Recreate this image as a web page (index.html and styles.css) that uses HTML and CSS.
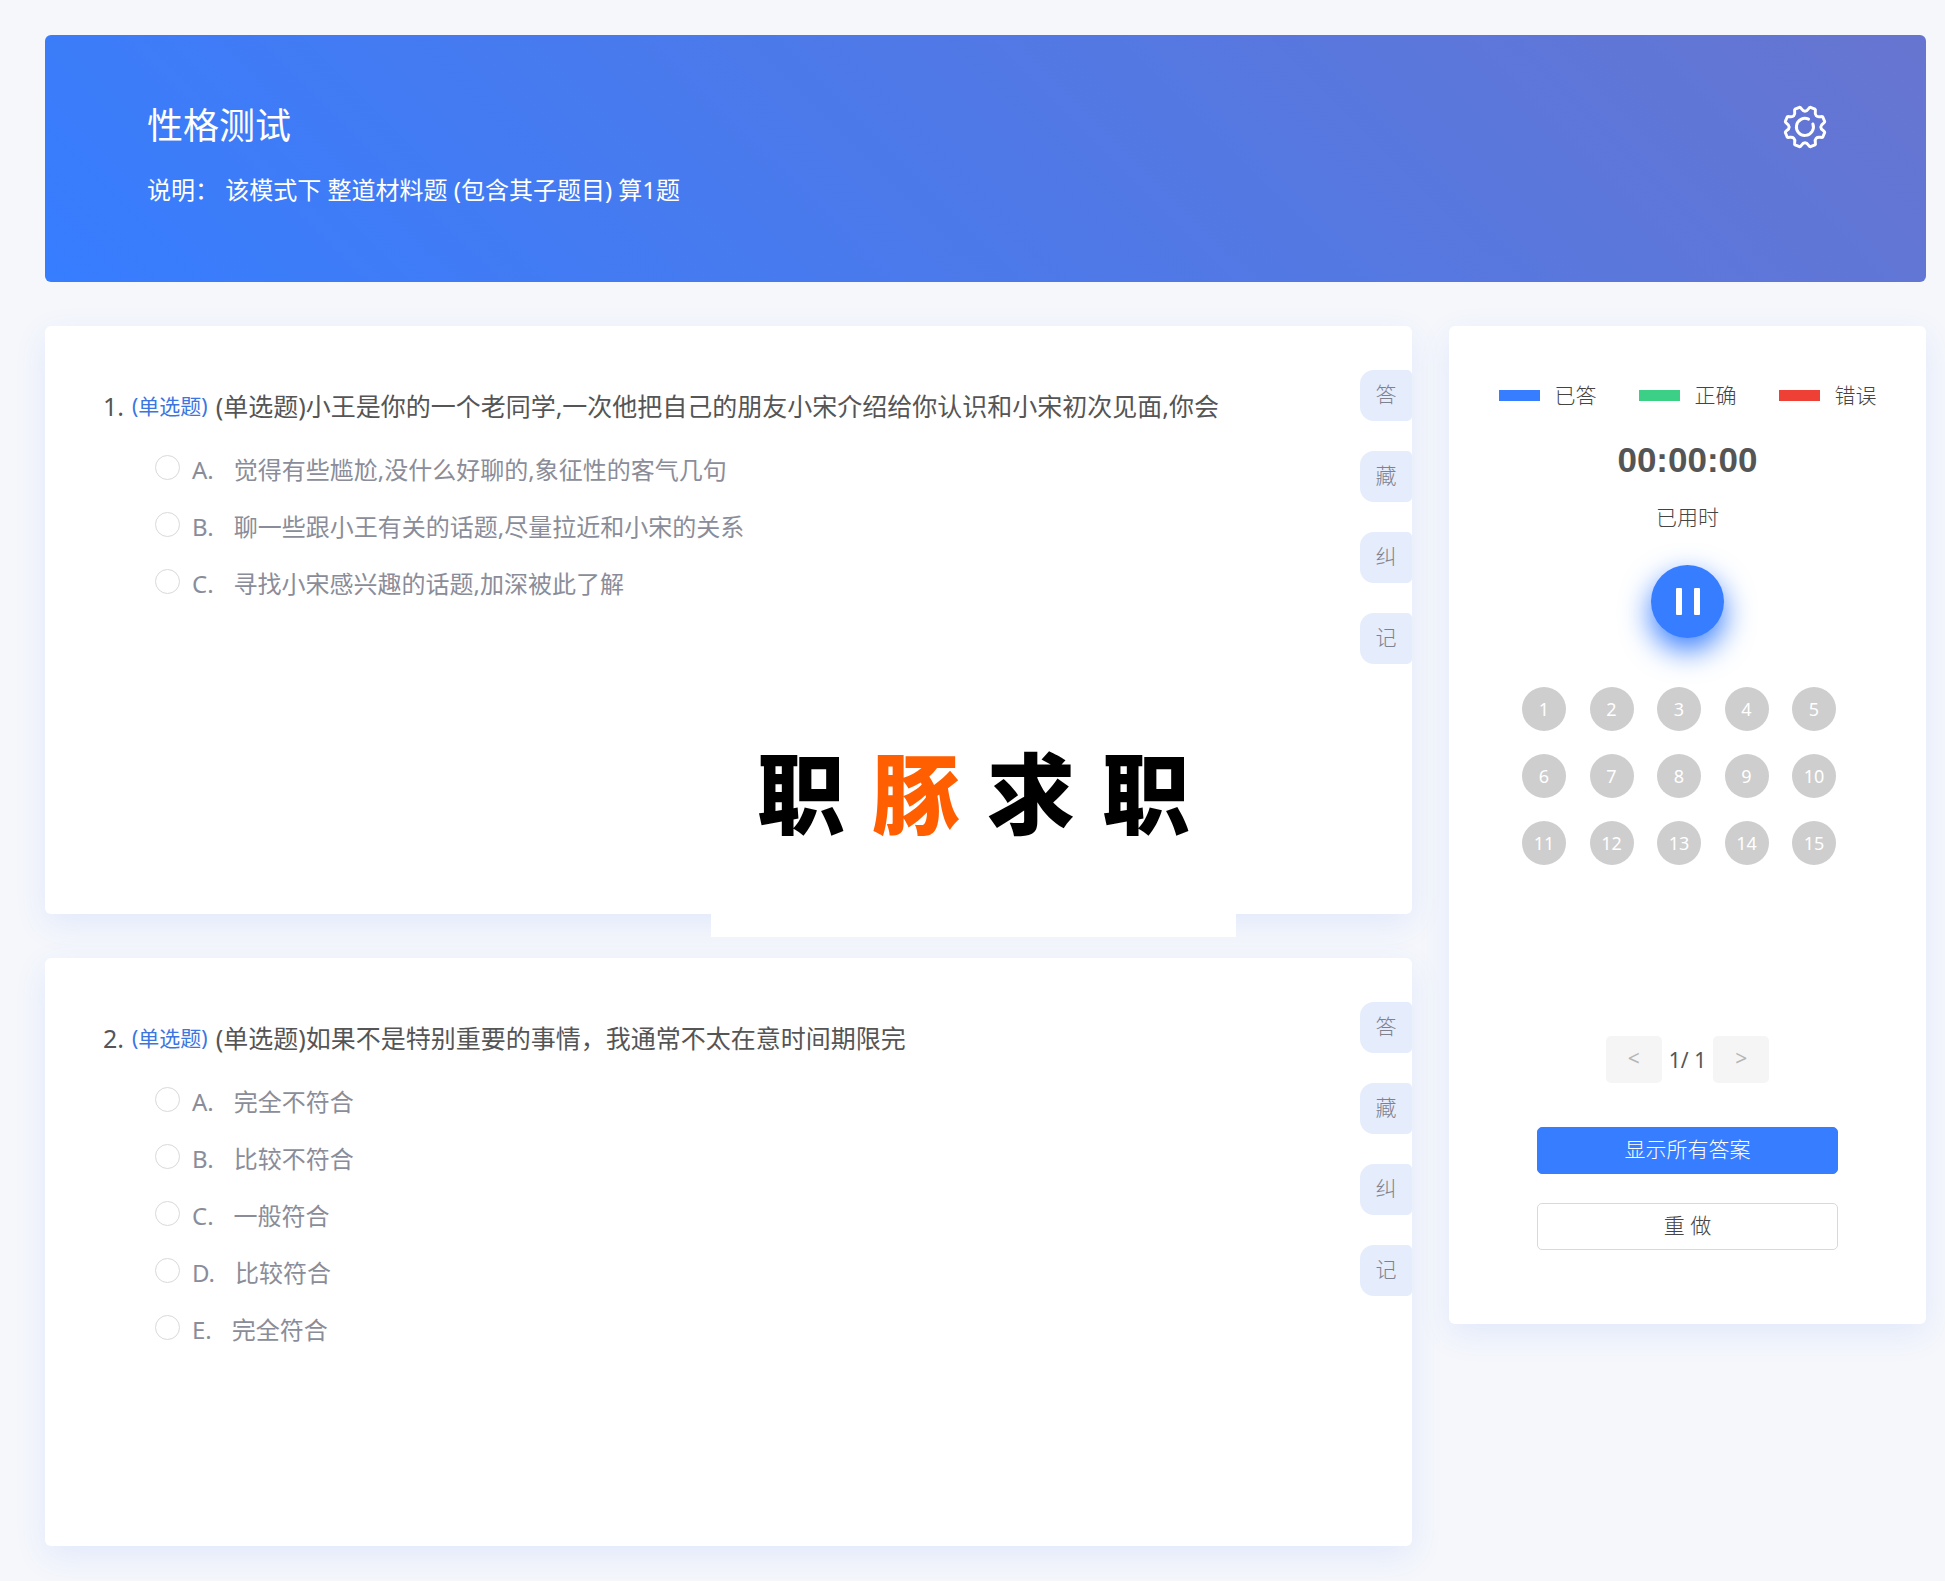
FILE: index.html
```html
<!DOCTYPE html>
<html lang="zh-CN">
<head>
<meta charset="utf-8">
<meta name="viewport" content="width=device-width, initial-scale=1">
<title>性格测试</title>
<link rel="stylesheet" href="styles.css">
</head>
<body>
<header class="banner">
  <div>
    <h1 class="banner-title">性格测试</h1>
    <p class="banner-note">说明： 该模式下 整道材料题 (包含其子题目) 算1题</p>
  </div>
  <button class="settings" type="button" aria-label="设置">
    <svg viewBox="0 0 44 44" width="44" height="44" fill="none" stroke="currentColor" stroke-width="3" stroke-linecap="round" stroke-linejoin="round">
      <path d="M16.500 2.300C18.500 2 18.500 6.200 22 6.200C25.500 6.200 25.500 2 27.500 2.300L32 4.200C33.600 5.400 30.700 8.300 33.200 10.800C35.700 13.300 38.600 10.400 39.800 12L41.700 16.500C42 18.500 37.800 18.500 37.800 22C37.800 25.500 42 25.500 41.700 27.500L39.800 32C38.600 33.600 35.700 30.700 33.200 33.200C30.700 35.700 33.600 38.600 32 39.800L27.500 41.700C25.500 42 25.500 37.800 22 37.800C18.500 37.800 18.500 42 16.500 41.700L12 39.800C10.400 38.600 13.300 35.700 10.800 33.200C8.300 30.700 5.400 33.600 4.200 32L2.300 27.500C2 25.500 6.200 25.500 6.200 22C6.200 18.500 2 18.500 2.300 16.500L4.200 12C5.400 10.400 8.300 13.300 10.800 10.800C13.300 8.300 10.400 5.400 12 4.200Z"/>
      <path d="M25.500 14.200A8.500 8.500 0 1 0 29.900 19"/>
    </svg>
  </button>
</header>
<div class="layout">
  <main class="questions">
    <section class="card question">
      <div class="question-body">
        <h2 class="stem"><span class="num">1.</span><span class="kind">(单选题)</span><span>(单选题)小王是你的一个老同学,一次他把自己的朋友小宋介绍给你认识和小宋初次见面,你会</span></h2>
        <div class="options">
          <label class="option"><input type="radio" name="q1"><span>A.</span><span class="answer">觉得有些尴尬,没什么好聊的,象征性的客气几句</span></label>
          <label class="option"><input type="radio" name="q1"><span>B.</span><span class="answer">聊一些跟小王有关的话题,尽量拉近和小宋的关系</span></label>
          <label class="option"><input type="radio" name="q1"><span>C.</span><span class="answer">寻找小宋感兴趣的话题,加深被此了解</span></label>
        </div>
      </div>
      <div class="tabs">
        <button type="button">答</button>
        <button type="button">藏</button>
        <button type="button">纠</button>
        <button type="button">记</button>
      </div>
      <div class="brand"><span>职</span><span class="accent">豚</span><span>求</span><span>职</span></div>
    </section>
    <section class="card question">
      <div class="question-body">
        <h2 class="stem"><span class="num">2.</span><span class="kind">(单选题)</span><span>(单选题)如果不是特别重要的事情，我通常不太在意时间期限完</span></h2>
        <div class="options">
          <label class="option"><input type="radio" name="q2"><span>A.</span><span class="answer">完全不符合</span></label>
          <label class="option"><input type="radio" name="q2"><span>B.</span><span class="answer">比较不符合</span></label>
          <label class="option"><input type="radio" name="q2"><span>C.</span><span class="answer">一般符合</span></label>
          <label class="option"><input type="radio" name="q2"><span>D.</span><span class="answer">比较符合</span></label>
          <label class="option"><input type="radio" name="q2"><span>E.</span><span class="answer">完全符合</span></label>
        </div>
      </div>
      <div class="tabs">
        <button type="button">答</button>
        <button type="button">藏</button>
        <button type="button">纠</button>
        <button type="button">记</button>
      </div>
    </section>
  </main>
  <aside class="card panel">
    <ul class="legend">
      <li class="done">已答</li>
      <li class="right">正确</li>
      <li class="wrong">错误</li>
    </ul>
    <div class="clock">00:00:00</div>
    <div class="clock-label">已用时</div>
    <button class="pause" type="button" aria-label="暂停"><i></i><i></i></button>
    <div class="sheet">
      <button type="button">1</button><button type="button">2</button><button type="button">3</button><button type="button">4</button><button type="button">5</button>
      <button type="button">6</button><button type="button">7</button><button type="button">8</button><button type="button">9</button><button type="button">10</button>
      <button type="button">11</button><button type="button">12</button><button type="button">13</button><button type="button">14</button><button type="button">15</button>
    </div>
    <nav class="pager">
      <button type="button" disabled>&lt;</button>
      <span>1/ 1</span>
      <button type="button" disabled>&gt;</button>
    </nav>
    <button class="action primary" type="button">显示所有答案</button>
    <button class="action" type="button">重 做</button>
  </aside>
</div>
</body>
</html>
```

FILE: styles.css
```css
* {
  box-sizing: border-box;
}

body {
  margin: 0;
  padding: 35px 19px 34px 45px;
  background: #f5f7fb;
  color: #555;
  font-family: "Noto Sans", "Noto Sans CJK SC", sans-serif;
  font-size: 21px;
  line-height: 32px;
}

h1, h2, p, ul {
  margin: 0;
  padding: 0;
  font-weight: 400;
}

button {
  padding: 0;
  border: 0;
  color: inherit;
  font: inherit;
  cursor: pointer;
}

/* Banner */
.banner {
  display: flex;
  justify-content: space-between;
  align-items: flex-start;
  min-height: 247px;
  padding: 65px 99px 0 102px;
  border-radius: 6px;
  background: linear-gradient(45deg, #367dff, #6775d0);
  color: #fff;
}

.banner-title {
  font-size: 36px;
  line-height: 52px;
}

.banner-note {
  margin-top: 20px;
  font-size: 24px;
  line-height: 36px;
}

.settings {
  display: flex;
  margin-top: 5px;
  background: none;
}

/* Columns */
.layout {
  display: flex;
  align-items: flex-start;
  gap: 37px;
  margin-top: 44px;
}

.questions {
  display: flex;
  flex: 1;
  flex-direction: column;
  gap: 44px;
}

.card {
  border-radius: 6px;
  background: #fff;
  box-shadow: 0 10px 32px rgba(54, 110, 255, 0.1);
}

/* Question */
.question {
  position: relative;
  display: flex;
  justify-content: space-between;
  min-height: 588px;
  padding-left: 58px;
}

.question-body {
  padding-top: 62px;
}

.stem {
  display: flex;
  align-items: center;
  gap: 8px;
  font-size: 25px;
  line-height: 36px;
}

.kind {
  color: #3b76e0;
  font-size: 21px;
}

.options {
  margin-top: 17px;
  padding-left: 52px;
}

.option {
  display: flex;
  align-items: center;
  height: 57px;
  color: #8a8d99;
  font-size: 24px;
}

.option input {
  appearance: none;
  width: 25px;
  height: 25px;
  margin: 0 12px 4px 0;
  border: 1px solid #d9d9d9;
  border-radius: 50%;
  background: #fff;
}

.option input:checked {
  border: 7px solid #367dff;
}

.answer {
  margin-left: 20px;
}

.tabs {
  display: flex;
  flex-direction: column;
  gap: 30px;
  padding-top: 44px;
}

.tabs button {
  width: 52px;
  height: 51px;
  padding-bottom: 3px;
  border-radius: 14px 5px 5px 14px;
  background: #e5ecfc;
  color: #7f828e;
  font-weight: 300;
}

.brand {
  position: absolute;
  bottom: -23px;
  left: 666px;
  display: flex;
  justify-content: center;
  gap: 27px;
  width: 525px;
  padding: 73px 0 85px;
  background: #fff;
  color: #000;
  font-family: "Noto Sans CJK SC", sans-serif;
  font-size: 88px;
  font-weight: 900;
  line-height: 126px;
}

.accent {
  color: #ff5f00;
}

/* Side panel */
.panel {
  display: flex;
  flex-direction: column;
  align-items: center;
  width: 477px;
  padding: 53px 0 74px;
}

.legend {
  display: flex;
  gap: 42px;
  color: #444;
  list-style: none;
  font-weight: 300;
}

.legend li {
  display: flex;
  align-items: center;
  gap: 15px;
}

.legend li::before {
  width: 41px;
  height: 11px;
  background: currentColor;
  content: "";
}

.legend .done::before {
  background: #367dff;
}

.legend .right::before {
  background: #3bd085;
}

.legend .wrong::before {
  background: #ee4035;
}

.clock {
  margin-top: 29px;
  font-family: "Liberation Sans", sans-serif;
  font-size: 35px;
  font-weight: 700;
  line-height: 40px;
}

.clock-label {
  margin-top: 21px;
  color: #444;
  font-weight: 300;
}

.pause {
  display: flex;
  justify-content: center;
  align-items: center;
  gap: 12px;
  width: 73px;
  height: 73px;
  margin-top: 32px;
  border-radius: 50%;
  background: #367dff;
  box-shadow: 0 12px 30px #367dff;
}

.pause i {
  width: 6px;
  height: 27px;
  border-radius: 1px;
  background: #fff;
}

.sheet {
  display: grid;
  grid-template-columns: repeat(5, 44px);
  justify-content: space-between;
  align-content: start;
  row-gap: 23px;
  width: 314px;
  min-height: 349px;
  margin: 49px 17px 0 0;
}

.sheet button {
  height: 44px;
  border-radius: 50%;
  background: #cecece;
  color: #fff;
  font-size: 18px;
}

.pager {
  display: flex;
  align-items: center;
  gap: 7px;
}

.pager button {
  width: 56px;
  height: 47px;
  padding-bottom: 3px;
  border-radius: 5px;
  background: #f5f5f5;
  color: #b5b5b5;
  font-size: 21px;
}

.action {
  width: 301px;
  height: 47px;
  margin-top: 29px;
  padding-bottom: 3px;
  border: 1px solid #d9d9d9;
  border-radius: 5px;
  background: #fff;
  color: #444;
  font-weight: 300;
}

.primary {
  margin-top: 44px;
  border-color: #367dff;
  background: #367dff;
  color: #fff;
}
```
